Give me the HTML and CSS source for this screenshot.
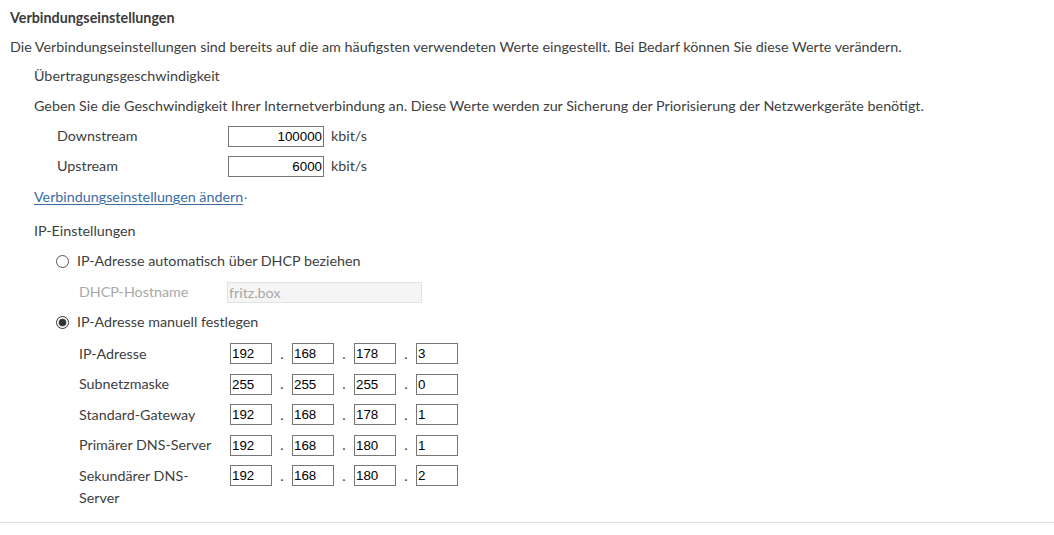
FILE: index.html
```html
<!DOCTYPE html>
<html lang="de">
<head>
<meta charset="utf-8">
<title>Verbindungseinstellungen</title>
<link rel="stylesheet" href="styles.css">
</head>
<body>
<div class="page">
  <div class="content">
    <h2 class="title">Verbindungseinstellungen</h2>
    <p class="text">Die Verbindungseinstellungen sind bereits auf die am häufigsten verwendeten Werte eingestellt. Bei Bedarf können Sie diese Werte verändern.</p>

    <div class="group">
      <p class="text g1">Übertragungsgeschwindigkeit</p>
      <p class="text g2">Geben Sie die Geschwindigkeit Ihrer Internetverbindung an. Diese Werte werden zur Sicherung der Priorisierung der Netzwerkgeräte benötigt.</p>
      <div class="speed-row g2">
        <span class="speed-label">Downstream</span>
        <input class="speed-input" type="text" value="100000">
        <span class="unit">kbit/s</span>
      </div>
      <div class="speed-row g2">
        <span class="speed-label">Upstream</span>
        <input class="speed-input" type="text" value="6000">
        <span class="unit">kbit/s</span>
      </div>
      <div class="link-row">
        <a class="link" href="#">Verbindungseinstellungen ändern</a><span class="link-dot">·</span>
      </div>

      <p class="text ip-head">IP-Einstellungen</p>

      <label class="radio-row">
        <span class="radio"></span>
        <span>IP-Adresse automatisch über DHCP beziehen</span>
      </label>
      <div class="host-row">
        <span class="host-label">DHCP-Hostname</span>
        <input class="host-input" type="text" value="fritz.box" disabled>
      </div>
      <label class="radio-row">
        <span class="radio checked"></span>
        <span>IP-Adresse manuell festlegen</span>
      </label>

      <div class="ip-row">
        <span class="ip-label">IP-Adresse</span>
        <div class="ip-fields">
          <input class="ip-input" value="192"><span class="ip-dot">.</span><input class="ip-input" value="168"><span class="ip-dot">.</span><input class="ip-input" value="178"><span class="ip-dot">.</span><input class="ip-input" value="3">
        </div>
      </div>
      <div class="ip-row">
        <span class="ip-label">Subnetzmaske</span>
        <div class="ip-fields">
          <input class="ip-input" value="255"><span class="ip-dot">.</span><input class="ip-input" value="255"><span class="ip-dot">.</span><input class="ip-input" value="255"><span class="ip-dot">.</span><input class="ip-input" value="0">
        </div>
      </div>
      <div class="ip-row">
        <span class="ip-label">Standard-Gateway</span>
        <div class="ip-fields">
          <input class="ip-input" value="192"><span class="ip-dot">.</span><input class="ip-input" value="168"><span class="ip-dot">.</span><input class="ip-input" value="178"><span class="ip-dot">.</span><input class="ip-input" value="1">
        </div>
      </div>
      <div class="ip-row">
        <span class="ip-label">Primärer DNS-Server</span>
        <div class="ip-fields">
          <input class="ip-input" value="192"><span class="ip-dot">.</span><input class="ip-input" value="168"><span class="ip-dot">.</span><input class="ip-input" value="180"><span class="ip-dot">.</span><input class="ip-input" value="1">
        </div>
      </div>
      <div class="ip-row">
        <span class="ip-label">Sekundärer DNS-Server</span>
        <div class="ip-fields">
          <input class="ip-input" value="192"><span class="ip-dot">.</span><input class="ip-input" value="168"><span class="ip-dot">.</span><input class="ip-input" value="180"><span class="ip-dot">.</span><input class="ip-input" value="2">
        </div>
      </div>
    </div>
  </div>
  <div class="rule"></div>
</div>
</body>
</html>
```
FILE: styles.css
```css
* { box-sizing: border-box; }
html, body { margin: 0; padding: 0; background: #fff; }
body {
  font-family: "Lato", "Noto Sans", sans-serif;
  font-size: 14.3px;
  line-height: 22px;
  color: #3e3e3e;
}
.page { width: 1054px; }
.content { padding: 7px 0 0 10px; }
.title {
  margin: 0;
  font-size: 14.3px;
  font-weight: 700;
  line-height: 22px;
  color: #3a3a3a;
}
.text { margin: 7px 0 0 0; }
.group { padding-left: 24px; }
.g1 { margin-top: 7px; }
.g2 { margin-top: 8px; }

.speed-row {
  display: flex;
  align-items: center;
  height: 22px;
  padding-left: 23px;
}
.speed-row + .speed-row { margin-top: 8px; }
.speed-label { width: 171px; }
input {
  font-family: "Liberation Sans", Arial, sans-serif;
  font-size: 13.33px;
  color: #000;
  border: 1px solid #767676;
  border-radius: 0;
  outline: none;
  margin: 0;
  height: 21px;
  background: #fff;
}
.speed-input {
  width: 96px;
  padding: 0 1px;
  text-align: right;
}
.unit { margin-left: 7px; }

.link-row { margin-top: 9px; height: 22px; }
.link {
  color: #3a6ca8;
  text-decoration: underline;
  text-underline-offset: 2px;
}
.link-dot { color: #3a6ca8; font-size: 11px; margin-left: 1px; }

.ip-head { margin-top: 12px; }

.radio-row {
  display: flex;
  align-items: center;
  height: 22px;
  margin-top: 8px;
  padding-left: 22px;
}
.radio {
  width: 13px;
  height: 13px;
  border: 1px solid #555;
  border-radius: 50%;
  margin-right: 8px;
  position: relative;
  background: #fff;
}
.radio.checked { border-color: #333; }
.radio.checked::after {
  content: "";
  position: absolute;
  left: 2px;
  top: 2px;
  width: 7px;
  height: 7px;
  border-radius: 50%;
  background: #333;
  box-shadow: 0 0 0 0.5px #999;
}

.host-row {
  display: flex;
  align-items: center;
  height: 22px;
  margin-top: 9px;
  padding-left: 45px;
  color: #a8a8a8;
}
.host-label { width: 148px; }
.host-input {
  width: 195px;
  height: 21px;
  padding: 0 1px;
  background: #f5f5f5;
  border: 1px solid #e2e2e2;
  color: #a8a8a8;
  font-family: "Lato", "Noto Sans", sans-serif;
  font-size: 14.3px;
}

.ip-row {
  display: flex;
  align-items: flex-start;
  margin-top: 8.5px;
  padding-left: 45px;
}
.radio-row + .ip-row { margin-top: 9.5px; }
.ip-label { width: 151px; flex: none; padding-right: 14px; line-height: 22px; }
.ip-fields {
  display: flex;
  align-items: center;
  height: 22px;
}
.ip-input {
  width: 42px;
  height: 21px;
  padding: 0 1px;
  text-align: left;
}
.ip-dot {
  width: 20px;
  text-align: center;
  line-height: 22px;
}

.rule {
  margin-top: 13px;
  height: 1px;
  background: #dcdcdc;
}
```
